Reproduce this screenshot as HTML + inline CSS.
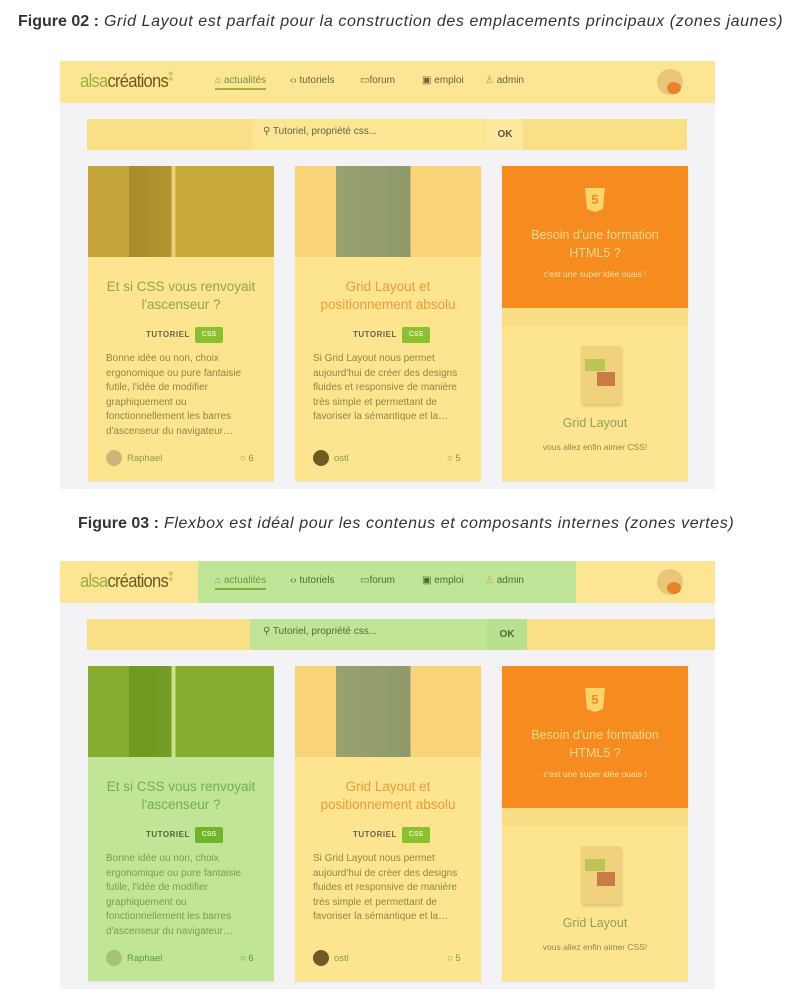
<!DOCTYPE html>
<html><head><meta charset="utf-8"><style>
*{margin:0;padding:0;box-sizing:border-box}
body{width:801px;height:1006px;background:#fff;font-family:"Liberation Sans",sans-serif;position:relative;overflow:hidden}
.cap{position:absolute;font-size:16px;color:#333;white-space:nowrap;letter-spacing:.6px}
.cap b{font-weight:bold;letter-spacing:0}.cap i{font-style:italic}
.fig{position:absolute;left:60px;width:655px;height:428px;background:#f3f3f5}
.a{position:absolute}
.hdr{left:0;top:0;width:655px;height:42px;background:#fce694}
.logo{left:20px;top:10px;font-size:18px;color:#6d8f2d;letter-spacing:-0.8px;transform:scaleX(.92);transform-origin:left}
.logo span{color:#9ab03a}
.nav{top:14px;font-size:10px;color:#6a6240;white-space:nowrap}
.srch{left:27px;top:58px;width:600px;height:31px;background:#f9df86}
.inp{left:192px;top:58px;width:235px;height:31px;background:#fce694}
.ok{left:427px;top:58px;width:36px;height:31px;background:#fbe9a0;font-size:10px;font-weight:bold;color:#5e573c;text-align:center;line-height:31px}
.card{top:105px;width:186px;height:315px;background:#fde590;box-shadow:0 1px 1px rgba(0,0,0,.08)}
.img{left:0;top:0;width:186px;height:91px}
.t{left:0;top:112px;width:186px;text-align:center;font-size:13.5px;line-height:18px}
.tag{top:164px;font-size:8px;font-weight:bold;color:#6b6548;letter-spacing:.5px}
.css{top:161px;width:28px;height:16px;background:#8cbf2d;border-radius:2px;color:#e7f3c4;font-size:7px;text-align:center;line-height:16px;font-weight:bold}
.txt{left:18px;top:186px;width:148px;font-size:10px;line-height:14.5px;color:#908646}
.foot{top:287px;font-size:9.5px;color:#8ca046}
.av{top:284px;left:18px;width:16px;height:16px;border-radius:50%}
</style></head><body>

<div class="cap" style="left:18px;top:13px"><b>Figure 02 :</b> <i>Grid Layout est parfait pour la construction des emplacements principaux (zones jaunes)</i></div>
<div class="cap" style="left:78px;top:515px"><b>Figure 03 :</b> <i>Flexbox est idéal pour les contenus et composants internes (zones vertes)</i></div>

<!-- FIG 1 -->
<div class="fig" style="top:61px">
 <div class="a hdr"></div>
 <div class="a logo"><span>alsa</span><span style="color:#6a5a1e">créations</span><span style="color:#9cc032;font-size:12px;vertical-align:top">⁑</span></div>
 <div class="a nav" style="left:155px;color:#7c8d3a;border-bottom:2px solid #a7b03a;padding-bottom:2px">⌂ actualités</div>
 <div class="a nav" style="left:230px">‹› tutoriels</div>
 <div class="a nav" style="left:300px">▭forum</div>
 <div class="a nav" style="left:362px">▣ emploi</div>
 <div class="a nav" style="left:425px"><span style="color:#e28a3a">♙</span> admin</div>
 <div class="a" style="left:597px;top:8px;width:26px;height:26px;border-radius:50%;background:#e9c67a"><div class="a" style="left:10px;top:13px;width:14px;height:12px;border-radius:50%;background:#e9822b"></div></div>
 <div class="a srch"></div><div class="a inp"></div>
 <div class="a" style="left:203px;top:65px;font-size:10px;color:#6a6240">⚲ Tutoriel, propriété css...</div>
 <div class="a ok">OK</div>

 <div class="a card" style="left:28px">
  <div class="a img" style="background:linear-gradient(90deg,#c5a63b 0,#c5a63b 22%,#a98c2a 22%,#b39530 45%,#e9d27a 45%,#e9d27a 47%,#c8aa3c 47%)"></div>
  <div class="a t" style="color:#8fa64a">Et si CSS vous renvoyait<br>l'ascenseur ?</div>
  <div class="a tag" style="left:58px">TUTORIEL</div><div class="a css" style="left:107px">CSS</div>
  <div class="a txt">Bonne idée ou non, choix ergonomique ou pure fantaisie futile, l'idée de modifier graphiquement ou fonctionnellement les barres d'ascenseur du navigateur…</div>
  <div class="a av" style="background:#cbb77a"></div>
  <div class="a foot" style="left:39px">Raphael</div><div class="a foot" style="left:152px;color:#7f9a3a">○ 6</div>
 </div>
 <div class="a card" style="left:235px">
  <div class="a img" style="background:linear-gradient(90deg,#f8d377 0,#f8d377 22%,#9aa170 22%,#8e9a6c 62%,#f8d377 62%)"></div>
  <div class="a t" style="color:#ef9a3c">Grid Layout et<br>positionnement absolu</div>
  <div class="a tag" style="left:58px">TUTORIEL</div><div class="a css" style="left:107px">CSS</div>
  <div class="a txt">Si Grid Layout nous permet aujourd'hui de créer des designs fluides et responsive de manière très simple et permettant de favoriser la sémantique et la…</div>
  <div class="a av" style="background:#6e5a22"></div>
  <div class="a foot" style="left:39px">ostl</div><div class="a foot" style="left:152px;color:#7f9a3a">○ 5</div>
 </div>
 <div class="a card" style="left:442px;background:#fde590">
  <div class="a" style="left:0;top:0;width:186px;height:142px;background:#f68b1f"></div>
  <div class="a" style="left:0;top:142px;width:186px;height:18px;background:#fade86"></div>
  <div class="a" style="left:83px;top:22px;width:20px;height:24px;background:#fbd46a;clip-path:polygon(0 0,100% 0,90% 88%,50% 100%,10% 88%);color:#f68b1f;font-size:13px;font-weight:bold;text-align:center;line-height:24px">5</div>
  <div class="a" style="left:0;top:60px;width:186px;text-align:center;font-size:12.5px;line-height:18px;color:#fbd98a">Besoin d'une formation<br>HTML5 ?</div>
  <div class="a" style="left:0;top:103px;width:186px;text-align:center;font-size:8.5px;color:#fbe2a6">c'est une super idée ouais !</div>
  <div class="a" style="left:79px;top:180px;width:40px;height:58px;background:#f1d27c;box-shadow:1px 2px 3px rgba(0,0,0,.15)"><div class="a" style="left:4px;top:13px;width:20px;height:12px;background:#bcc454"></div><div class="a" style="left:16px;top:26px;width:18px;height:14px;background:#c97a45"></div></div>
  <div class="a" style="left:0;top:250px;width:186px;text-align:center;font-size:12.5px;color:#8e9f5c">Grid Layout</div>
  <div class="a" style="left:0;top:276px;width:186px;text-align:center;font-size:8.5px;color:#8e8a4a">vous allez enfin aimer CSS!</div>
 </div>
</div>

<!-- FIG 2 -->
<div class="fig" style="top:561px">
 <div class="a hdr"></div>
 <div class="a" style="left:138px;top:0;width:378px;height:42px;background:#bfe598"></div>
 <div class="a logo"><span>alsa</span><span style="color:#6a5a1e">créations</span><span style="color:#9cc032;font-size:12px;vertical-align:top">⁑</span></div>
 <div class="a nav" style="left:155px;color:#6f9a3a;border-bottom:2px solid #7fb03a;padding-bottom:2px">⌂ actualités</div>
 <div class="a nav" style="left:230px;color:#4f6a38">‹› tutoriels</div>
 <div class="a nav" style="left:300px;color:#4f6a38">▭forum</div>
 <div class="a nav" style="left:362px;color:#4f6a38">▣ emploi</div>
 <div class="a nav" style="left:425px;color:#4f6a38"><span style="color:#c9a63a">♙</span> admin</div>
 <div class="a" style="left:597px;top:8px;width:26px;height:26px;border-radius:50%;background:#e9c67a"><div class="a" style="left:10px;top:13px;width:14px;height:12px;border-radius:50%;background:#e9822b"></div></div>
 <div class="a srch" style="width:628px"></div>
 <div class="a" style="left:190px;top:58px;width:277px;height:31px;background:#c0e597"></div>
 <div class="a" style="left:427px;top:58px;width:40px;height:31px;background:#b8e08e"></div>
 <div class="a" style="left:203px;top:65px;font-size:10px;color:#4f6a38">⚲ Tutoriel, propriété css...</div>
 <div class="a" style="left:427px;top:58px;width:40px;text-align:center;line-height:31px;font-size:10px;font-weight:bold;color:#4f6a38">OK</div>

 <div class="a card" style="left:28px;background:#c0e597">
  <div class="a img" style="background:linear-gradient(90deg,#86ad2e 0,#86ad2e 22%,#6e9a22 22%,#739d25 45%,#c9e28e 45%,#c9e28e 47%,#86ad2e 47%)"></div>
  <div class="a t" style="color:#6fae5a">Et si CSS vous renvoyait<br>l'ascenseur ?</div>
  <div class="a tag" style="left:58px;color:#52663c">TUTORIEL</div><div class="a css" style="left:107px;background:#6cb62a">CSS</div>
  <div class="a txt" style="color:#7d9c46">Bonne idée ou non, choix ergonomique ou pure fantaisie futile, l'idée de modifier graphiquement ou fonctionnellement les barres d'ascenseur du navigateur…</div>
  <div class="a av" style="background:#a7c07a"></div>
  <div class="a foot" style="left:39px;color:#5a9c3a">Raphael</div><div class="a foot" style="left:152px;color:#4f9c5a">○ 6</div>
 </div>
 <div class="a card" style="left:235px">
  <div class="a img" style="background:linear-gradient(90deg,#f8d377 0,#f8d377 22%,#9aa170 22%,#8e9a6c 62%,#f8d377 62%)"></div>
  <div class="a t" style="color:#ef9a3c">Grid Layout et<br>positionnement absolu</div>
  <div class="a tag" style="left:58px">TUTORIEL</div><div class="a css" style="left:107px">CSS</div>
  <div class="a txt">Si Grid Layout nous permet aujourd'hui de créer des designs fluides et responsive de manière très simple et permettant de favoriser la sémantique et la…</div>
  <div class="a av" style="background:#6e5a22"></div>
  <div class="a foot" style="left:39px">ostl</div><div class="a foot" style="left:152px;color:#7f9a3a">○ 5</div>
 </div>
 <div class="a card" style="left:442px;background:#fde590">
  <div class="a" style="left:0;top:0;width:186px;height:142px;background:#f68b1f"></div>
  <div class="a" style="left:0;top:142px;width:186px;height:18px;background:#fade86"></div>
  <div class="a" style="left:83px;top:22px;width:20px;height:24px;background:#fbd46a;clip-path:polygon(0 0,100% 0,90% 88%,50% 100%,10% 88%);color:#f68b1f;font-size:13px;font-weight:bold;text-align:center;line-height:24px">5</div>
  <div class="a" style="left:0;top:60px;width:186px;text-align:center;font-size:12.5px;line-height:18px;color:#fbd98a">Besoin d'une formation<br>HTML5 ?</div>
  <div class="a" style="left:0;top:103px;width:186px;text-align:center;font-size:8.5px;color:#fbe2a6">c'est une super idée ouais !</div>
  <div class="a" style="left:79px;top:180px;width:40px;height:58px;background:#f1d27c;box-shadow:1px 2px 3px rgba(0,0,0,.15)"><div class="a" style="left:4px;top:13px;width:20px;height:12px;background:#bcc454"></div><div class="a" style="left:16px;top:26px;width:18px;height:14px;background:#c97a45"></div></div>
  <div class="a" style="left:0;top:250px;width:186px;text-align:center;font-size:12.5px;color:#8e9f5c">Grid Layout</div>
  <div class="a" style="left:0;top:276px;width:186px;text-align:center;font-size:8.5px;color:#8e8a4a">vous allez enfin aimer CSS!</div>
 </div>
</div>
</body></html>
